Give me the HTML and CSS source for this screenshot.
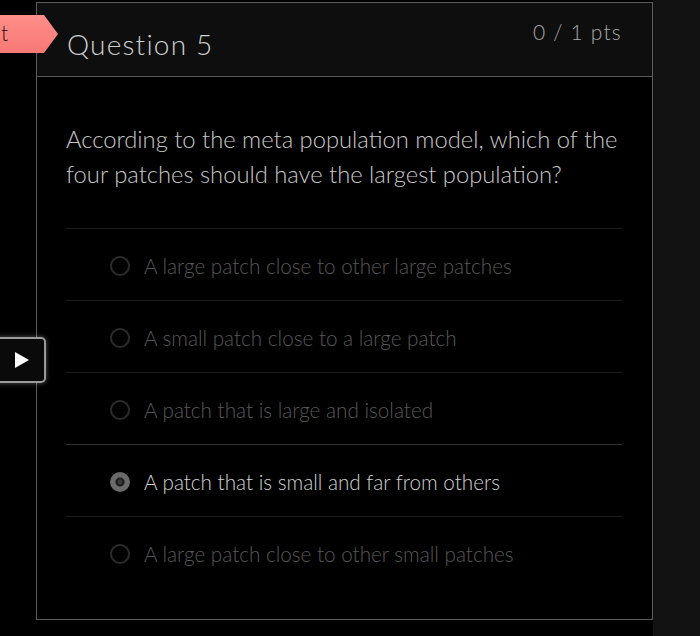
FILE: index.html
```html
<!DOCTYPE html>
<html lang="en">
<head>
<meta charset="utf-8">
<title>Question 5</title>
<link rel="stylesheet" href="styles.css">
</head>
<body>
<div class="page">
  <div class="gutter">
    <div class="flag"><span class="flag-text">t</span></div>
    <button class="play" aria-label="Play">
      <svg width="14" height="16" viewBox="0 0 14 16"><polygon points="0,0 14,8 0,16" fill="#ffffff"/></svg>
    </button>
  </div>
  <section class="card">
    <header class="card-head">
      <h2 class="title">Question 5</h2>
      <div class="pts">0 / 1 pts</div>
    </header>
    <div class="card-body">
      <p class="question">According to the meta population model, which of the four patches should have the largest population?</p>
      <ul class="options">
        <li class="option"><span class="radio"></span><span class="label">A large patch close to other large patches</span></li>
        <li class="option"><span class="radio"></span><span class="label">A small patch close to a large patch</span></li>
        <li class="option"><span class="radio"></span><span class="label">A patch that is large and isolated</span></li>
        <li class="option selected"><span class="radio"></span><span class="label">A patch that is small and far from others</span></li>
        <li class="option"><span class="radio"></span><span class="label">A large patch close to other small patches</span></li>
      </ul>
    </div>
  </section>
  <div class="side"></div>
</div>
</body>
</html>
```

FILE: styles.css
```css
* { box-sizing: border-box; }
html, body { margin: 0; padding: 0; }
body {
  background: #000;
  font-family: Lato, "Open Sans", sans-serif;
  width: 700px;
  height: 636px;
  overflow: hidden;
}
.page {
  display: flex;
  height: 636px;
}
.gutter {
  width: 36px;
  flex: none;
  position: relative;
  z-index: 2;
}
.flag {
  position: absolute;
  left: 0;
  top: 15px;
  width: 58px;
  height: 38px;
  background: linear-gradient(180deg, #ff8e8a 0%, #f77874 100%);
  clip-path: polygon(0 0, 44px 0, 58px 19px, 44px 38px, 0 38px);
  overflow: hidden;
}
.flag-text {
  position: absolute;
  left: 1px;
  top: 4px;
  font-size: 21px;
  font-weight: 300;
  color: #2a1414;
  line-height: 28px;
}
.play {
  position: absolute;
  left: -6px;
  top: 337px;
  width: 52px;
  height: 46px;
  border: 2px solid #9a9a9a;
  border-radius: 5px;
  background: #0a0a0a;
  box-shadow: 0 0 5px rgba(255,255,255,0.35);
  display: flex;
  align-items: center;
  justify-content: center;
  padding: 0 0 0 4px;
}
.card {
  width: 617px;
  flex: none;
  margin-top: 2px;
  height: 618px;
  border: 1px solid #5c5c5c;
  background: #000;
  display: flex;
  flex-direction: column;
}
.card-head {
  height: 74px;
  background: #0e0e0e;
  border-bottom: 1px solid #585858;
  display: flex;
  justify-content: space-between;
  align-items: flex-start;
  padding: 0 30px 0 30px;
}
.title {
  margin: 25px 0 0;
  font-size: 28px;
  font-weight: 300;
  color: #cfcfcf;
  line-height: 32px;
  letter-spacing: 1.2px;
}
.pts {
  margin-top: 15px;
  font-size: 21px;
  font-weight: 300;
  color: #a8a8a8;
  line-height: 28px;
  letter-spacing: 1.2px;
}
.card-body {
  padding: 45px 30px 0 29px;
}
.question {
  margin: 0 0 36px;
  font-size: 23.75px;
  line-height: 35px;
  color: #c9c9c9;
  font-weight: 300;
}
.options {
  list-style: none;
  margin: 0;
  padding: 0;
}
.option {
  height: 72px;
  border-top: 1px solid #1c1c1c;
  display: flex;
  align-items: center;
  padding: 3px 0 0 44px;
  gap: 14px;
}
.option.selected {
  border-top-color: #333;
}
.radio {
  width: 20px;
  height: 20px;
  border-radius: 50%;
  border: 2px solid #2c2c2c;
  flex: none;
}
.option.selected .radio {
  border: none;
  background: radial-gradient(circle, #3a3a3a 0 2px, #1a1a1a 3px 4px, #6a6a6a 5px 10px);
}
.label {
  font-size: 20.7px;
  font-weight: 300;
  color: #585858;
  line-height: 24px;
}
.option.selected .label {
  color: #d2d2d2;
}
.side {
  flex: 1;
  background: #121212;
}
```
